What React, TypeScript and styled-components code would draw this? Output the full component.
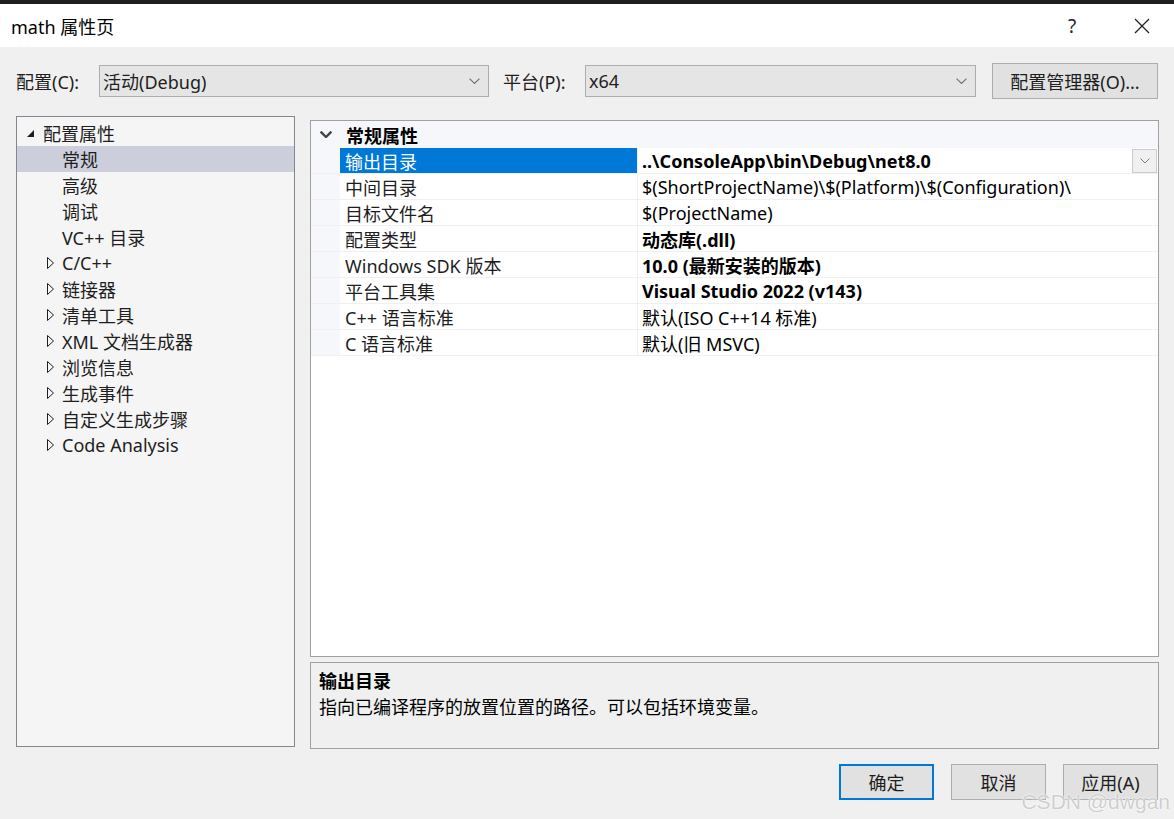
import styled, { createGlobalStyle } from "styled-components";

const GlobalStyle = createGlobalStyle`
  html, body {
    margin: 0;
    padding: 0;
    background: #f0f0f0;
  }
  body {
    width: 1174px;
    height: 819px;
    overflow: hidden;
    font-family: "Noto Sans", "Noto Sans CJK SC", sans-serif;
    color: #1e1e1e;
  }
`;

const Window = styled.div`
  position: relative;
  width: 1174px;
  height: 819px;
  display: flex;
  flex-direction: column;
`;

const TopStrip = styled.div`
  height: 4px;
  background: #1f1f1f;
`;

const TitleBar = styled.div`
  height: 43px;
  background: #ffffff;
  display: flex;
  align-items: center;
  padding-left: 11px;
  font-size: 18px;
  color: #000;
`;

const TitleText = styled.div`
  flex: 1;
`;

const TitleButton = styled.div<{ $w: number }>`
  width: ${(p) => p.$w}px;
  height: 43px;
  display: flex;
  align-items: center;
  justify-content: center;
  font-size: 19px;
  color: #222;
`;

const Toolbar = styled.div`
  display: flex;
  align-items: center;
  height: 36px;
  margin-top: 16px;
  padding: 0 16px;
  font-size: 18px;
`;

const Label = styled.div<{ $w: number; $ml?: number }>`
  width: ${(p) => p.$w}px;
  margin-left: ${(p) => p.$ml ?? 0}px;
  flex-shrink: 0;
  color: #1e1e1e;
`;

const Combo = styled.div<{ $w: number }>`
  width: ${(p) => p.$w}px;
  height: 32px;
  box-sizing: border-box;
  border: 1px solid #adadad;
  background: #e5e5e5;
  display: flex;
  align-items: center;
  padding: 0 8px 0 3px;
  color: #1e1e1e;
  justify-content: space-between;
`;

const Button = styled.div<{ $w: number; $ml?: number; $default?: boolean }>`
  width: ${(p) => p.$w}px;
  margin-left: ${(p) => p.$ml ?? 0}px;
  height: 36px;
  box-sizing: border-box;
  border: ${(p) => (p.$default ? "2px solid #0078d7" : "1px solid #adadad")};
  background: #e1e1e1;
  display: flex;
  align-items: center;
  justify-content: center;
  font-size: 18px;
  color: #1e1e1e;
  flex-shrink: 0;
`;

const Main = styled.div`
  display: flex;
  gap: 15px;
  margin-top: 17px;
  padding: 0 15px 0 16px;
`;

const Tree = styled.div`
  width: 279px;
  height: 631px;
  box-sizing: border-box;
  border: 1px solid #828790;
  background: #f5f5f5;
  padding-top: 3px;
  font-size: 18px;
`;

const TreeRow = styled.div<{ $selected?: boolean; $indent: number }>`
  height: 26px;
  display: flex;
  align-items: center;
  padding-left: ${(p) => p.$indent}px;
  background: ${(p) => (p.$selected ? "#cccedb" : "transparent")};
  white-space: nowrap;
`;

const Arrow = styled.span<{ $w: number }>`
  width: ${(p) => p.$w}px;
  display: inline-flex;
  align-items: center;
  flex-shrink: 0;
`;

const RightColumn = styled.div`
  width: 849px;
  padding-top: 4px;
  display: flex;
  flex-direction: column;
  gap: 5px;
`;

const Grid = styled.div`
  height: 537px;
  box-sizing: border-box;
  border: 1px solid #a0a0a0;
  background: #ffffff;
  font-size: 18px;
  display: flex;
  flex-direction: column;
`;

const CategoryRow = styled.div`
  height: 27px;
  display: flex;
  align-items: center;
  background: #f5f7fb;
  font-weight: 700;
  color: #000;
`;

const CategoryLabel = styled.span`
  padding-left: 6px;
`;

const Gutter = styled.div`
  width: 29px;
  align-self: stretch;
  display: flex;
  align-items: center;
  justify-content: center;
  background: #f5f7fb;
  flex-shrink: 0;
`;

const PropRow = styled.div`
  height: 26px;
  display: flex;
  border-bottom: 1px solid #f0f0f0;
  box-sizing: border-box;
`;

const NameCell = styled.div<{ $selected?: boolean }>`
  width: 298px;
  flex-shrink: 0;
  display: flex;
  align-items: center;
  padding-left: 5px;
  box-sizing: border-box;
  background: ${(p) => (p.$selected ? "#0078d7" : "#ffffff")};
  color: ${(p) => (p.$selected ? "#ffffff" : "#1e1e1e")};
  border-right: 1px solid #f0f0f0;
  white-space: nowrap;
`;

const ValueCell = styled.div<{ $bold?: boolean }>`
  flex: 1;
  display: flex;
  align-items: center;
  padding-left: 4px;
  font-weight: ${(p) => (p.$bold ? 700 : 400)};
  color: #000;
  white-space: nowrap;
  overflow: hidden;
`;

const DropButton = styled.div`
  margin-left: auto;
  width: 25px;
  height: 24px;
  box-sizing: border-box;
  border: 1px solid #cccccc;
  background: #f0f0f0;
  display: flex;
  align-items: center;
  justify-content: center;
  margin-right: 1px;
`;

const Description = styled.div`
  height: 87px;
  box-sizing: border-box;
  border: 1px solid #a0a0a0;
  background: #f0f0f0;
  padding: 5px 8px;
  font-size: 18px;
  color: #000;
`;

const DescTitle = styled.div`
  font-weight: 700;
  line-height: 26px;
`;

const DescText = styled.div`
  line-height: 26px;
`;

const Footer = styled.div`
  display: flex;
  justify-content: flex-end;
  gap: 17px;
  margin-top: 15px;
  padding-right: 16px;
`;

const Watermark = styled.div`
  position: absolute;
  right: 4px;
  bottom: 5px;
  font-family: "Liberation Sans", Arial, sans-serif;
  font-size: 21px;
  color: rgba(185, 185, 185, 0.7);
  text-shadow: 0 0 1px #ffffff, 0 0 2px #ffffff;
  pointer-events: none;
`;

const ChevronDown = ({ size = 9, color = "#606060", stroke = 1 }) => (
  <svg width={size} height={size * 0.6} viewBox="0 0 10 6">
    <polyline points="0.5,0.5 5,5 9.5,0.5" fill="none" stroke={color} strokeWidth={stroke} />
  </svg>
);

const Expanded = () => (
  <svg width="9" height="9" viewBox="0 0 9 9">
    <polygon points="8,1 8,8 1,8" fill="#1e1e1e" />
  </svg>
);

const Collapsed = () => (
  <svg width="7" height="12" viewBox="0 0 7 12">
    <polygon points="0.5,0.5 6.5,6 0.5,11.5" fill="none" stroke="#1e1e1e" strokeWidth="1" />
  </svg>
);

const CloseIcon = () => (
  <svg width="16" height="16" viewBox="0 0 16 16">
    <line x1="1" y1="1" x2="15" y2="15" stroke="#222" strokeWidth="1.2" />
    <line x1="15" y1="1" x2="1" y2="15" stroke="#222" strokeWidth="1.2" />
  </svg>
);

const treeItems: { label: string; level: 0 | 1 | 2; selected?: boolean }[] = [
  { label: "配置属性", level: 0 },
  { label: "常规", level: 2, selected: true },
  { label: "高级", level: 2 },
  { label: "调试", level: 2 },
  { label: "VC++ 目录", level: 2 },
  { label: "C/C++", level: 1 },
  { label: "链接器", level: 1 },
  { label: "清单工具", level: 1 },
  { label: "XML 文档生成器", level: 1 },
  { label: "浏览信息", level: 1 },
  { label: "生成事件", level: 1 },
  { label: "自定义生成步骤", level: 1 },
  { label: "Code Analysis", level: 1 },
];

const props: { name: string; value: string; bold?: boolean; selected?: boolean }[] = [
  { name: "输出目录", value: "..\\ConsoleApp\\bin\\Debug\\net8.0", bold: true, selected: true },
  { name: "中间目录", value: "$(ShortProjectName)\\$(Platform)\\$(Configuration)\\" },
  { name: "目标文件名", value: "$(ProjectName)" },
  { name: "配置类型", value: "动态库(.dll)", bold: true },
  { name: "Windows SDK 版本", value: "10.0 (最新安装的版本)", bold: true },
  { name: "平台工具集", value: "Visual Studio 2022 (v143)", bold: true },
  { name: "C++ 语言标准", value: "默认(ISO C++14 标准)" },
  { name: "C 语言标准", value: "默认(旧 MSVC)" },
];

export default function App() {
  return (
    <>
      <GlobalStyle />
      <Window>
        <TopStrip />
        <TitleBar>
          <TitleText>math 属性页</TitleText>
          <TitleButton $w={76}>?</TitleButton>
          <TitleButton $w={64}>
            <CloseIcon />
          </TitleButton>
        </TitleBar>

        <Toolbar>
          <Label $w={83}>配置(C):</Label>
          <Combo $w={390}>
            <span>活动(Debug)</span>
            <ChevronDown size={11} color="#707070" />
          </Combo>
          <Label $w={82} $ml={14}>
            平台(P):
          </Label>
          <Combo $w={391}>
            <span>x64</span>
            <ChevronDown size={11} color="#707070" />
          </Combo>
          <Button $w={166} $ml={16}>
            配置管理器(O)...
          </Button>
        </Toolbar>

        <Main>
          <Tree>
            {treeItems.map((item) => (
              <TreeRow
                key={item.label}
                $selected={item.selected}
                $indent={item.level === 0 ? 9 : item.level === 1 ? 30 : 45}
              >
                {item.level === 0 && (
                  <Arrow $w={17}>
                    <Expanded />
                  </Arrow>
                )}
                {item.level === 1 && (
                  <Arrow $w={15}>
                    <Collapsed />
                  </Arrow>
                )}
                <span>{item.label}</span>
              </TreeRow>
            ))}
          </Tree>

          <RightColumn>
            <Grid>
              <CategoryRow>
                <Gutter>
                  <ChevronDown size={12} color="#444" stroke={2} />
                </Gutter>
                <CategoryLabel>常规属性</CategoryLabel>
              </CategoryRow>
              {props.map((p) => (
                <PropRow key={p.name}>
                  <Gutter />
                  <NameCell $selected={p.selected}>{p.name}</NameCell>
                  <ValueCell $bold={p.bold}>
                    {p.value}
                    {p.selected && (
                      <DropButton>
                        <ChevronDown size={10} color="#808080" />
                      </DropButton>
                    )}
                  </ValueCell>
                </PropRow>
              ))}
            </Grid>
            <Description>
              <DescTitle>输出目录</DescTitle>
              <DescText>指向已编译程序的放置位置的路径。可以包括环境变量。</DescText>
            </Description>
          </RightColumn>
        </Main>

        <Footer>
          <Button $w={95} $default>
            确定
          </Button>
          <Button $w={95}>取消</Button>
          <Button $w={95}>应用(A)</Button>
        </Footer>

        <Watermark>CSDN @dwgan</Watermark>
      </Window>
    </>
  );
}
